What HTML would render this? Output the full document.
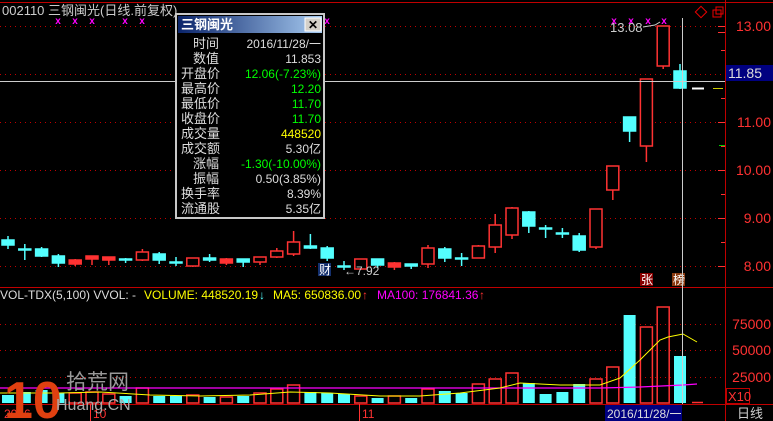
<!DOCTYPE html>
<html><head><meta charset="utf-8"><style>
html,body{margin:0;padding:0;background:#000;width:773px;height:421px;overflow:hidden}
svg{display:block}
text{font-family:"Liberation Sans","WenQuanYi Zen Hei","Noto Sans CJK SC",sans-serif}
</style></head><body>
<svg width="773" height="421" viewBox="0 0 773 421" xmlns="http://www.w3.org/2000/svg">
<rect width="773" height="421" fill="#000"/>
<g stroke="#c00000" stroke-width="1">
<line x1="0" y1="2.5" x2="773" y2="2.5"/>
<line x1="0" y1="287.5" x2="773" y2="287.5"/>
<line x1="0" y1="404.5" x2="773" y2="404.5"/>
<line x1="725.5" y1="0" x2="725.5" y2="421"/>
</g>
<g stroke="#c00000" stroke-width="1" stroke-dasharray="1,4">
<line x1="0" y1="26.5" x2="725" y2="26.5"/>
<line x1="0" y1="74.5" x2="725" y2="74.5"/>
<line x1="0" y1="122.5" x2="725" y2="122.5"/>
<line x1="0" y1="170.5" x2="725" y2="170.5"/>
<line x1="0" y1="218.5" x2="725" y2="218.5"/>
<line x1="0" y1="266.5" x2="725" y2="266.5"/>
<line x1="0" y1="324.5" x2="725" y2="324.5"/>
<line x1="0" y1="350.5" x2="725" y2="350.5"/>
<line x1="0" y1="377.5" x2="725" y2="377.5"/>
</g>
<g stroke="#ff3232">
<line x1="718" y1="26.5" x2="725" y2="26.5"/><line x1="718" y1="122.5" x2="725" y2="122.5"/>
<line x1="718" y1="170.5" x2="725" y2="170.5"/><line x1="718" y1="218.5" x2="725" y2="218.5"/>
<line x1="718" y1="266.5" x2="725" y2="266.5"/><line x1="718" y1="32.5" x2="725" y2="32.5"/>
<line x1="721" y1="50.5" x2="725" y2="50.5"/><line x1="721" y1="98.5" x2="725" y2="98.5"/>
<line x1="721" y1="146.5" x2="725" y2="146.5"/><line x1="721" y1="194.5" x2="725" y2="194.5"/>
<line x1="721" y1="242.5" x2="725" y2="242.5"/>
</g>
<line x1="719" y1="145.5" x2="725" y2="145.5" stroke="#0c0"/>
<g fill="#ff3232" font-size="14" text-anchor="end">
<text x="771" y="31">13.00</text><text x="771" y="127">11.00</text><text x="771" y="175">10.00</text>
<text x="771" y="223">9.00</text><text x="771" y="271">8.00</text>
<text x="771" y="329">75000</text><text x="771" y="355">50000</text><text x="771" y="382">25000</text>
</g>
<rect x="726" y="65" width="47" height="16" fill="#000080"/>
<text x="728" y="78" font-size="14" fill="#ddd">11.85</text>
<rect x="726.5" y="388.5" width="23" height="15" fill="none" stroke="#c00000"/>
<text x="728" y="401" font-size="13" fill="#ff3232">X10</text>
<text x="737" y="418" font-size="13" fill="#ccc">日线</text>

<text x="2" y="15" font-size="13" fill="#ccc">002110 三钢闽光(日线.前复权)</text>
<g fill="#ff00ff" font-size="10" font-weight="bold" text-anchor="middle">
<text x="58" y="24">x</text><text x="75" y="24">x</text><text x="92" y="24">x</text><text x="125" y="24">x</text><text x="142" y="24">x</text><text x="327" y="24">x</text>
<text x="614" y="24">x</text><text x="631" y="24">x</text><text x="648" y="24">x</text><text x="664" y="24">x</text>
</g>
<rect x="697" y="8" width="8" height="8" fill="none" stroke="#e00" transform="rotate(45 701 12)"/>
<rect x="713" y="10" width="8" height="7" fill="none" stroke="#e00"/><rect x="716" y="7" width="7" height="7" fill="none" stroke="#e00"/>
<text x="610" y="32" font-size="13" fill="#ccc">13.08</text>
<path d="M643 27 L655 25 L660 22" stroke="#ccc" fill="none"/>

<g stroke-width="1.5">
<g stroke="#54ffff" fill="#54ffff">
<line x1="8" y1="236" x2="8" y2="249"/><rect x="2" y="240" width="12" height="5"/>
<line x1="24.8" y1="244" x2="24.8" y2="260"/><rect x="18.8" y="249" width="12" height="1"/>
<line x1="41.6" y1="247" x2="41.6" y2="257"/><rect x="35.6" y="249" width="12" height="7"/>
<line x1="58.4" y1="254" x2="58.4" y2="267"/><rect x="52.4" y="256" width="12" height="7"/>
<line x1="125.6" y1="258" x2="125.6" y2="263"/><rect x="119.6" y="259" width="12" height="1"/>
<line x1="159.2" y1="252" x2="159.2" y2="264"/><rect x="153.2" y="254" width="12" height="6"/>
<line x1="176" y1="257" x2="176" y2="266"/><rect x="170" y="262" width="12" height="1"/>
<line x1="209.6" y1="254" x2="209.6" y2="262"/><rect x="203.6" y="258" width="12" height="2"/>
<line x1="243.2" y1="259" x2="243.2" y2="267"/><rect x="237.2" y="259" width="12" height="3"/>
<line x1="310.4" y1="234" x2="310.4" y2="249"/><rect x="304.4" y="246" width="12" height="2"/>
<line x1="327.2" y1="246" x2="327.2" y2="261"/><rect x="321.2" y="248" width="12" height="10"/>
<line x1="344" y1="261" x2="344" y2="270"/><rect x="338" y="266" width="12" height="1"/>
<line x1="377.6" y1="259" x2="377.6" y2="268"/><rect x="371.6" y="259" width="12" height="6"/>
<line x1="411.2" y1="264" x2="411.2" y2="269"/><rect x="405.2" y="264" width="12" height="2"/>
<line x1="444.8" y1="247" x2="444.8" y2="262"/><rect x="438.8" y="249" width="12" height="9"/>
<line x1="461.6" y1="253" x2="461.6" y2="266"/><rect x="455.6" y="258" width="12" height="1"/>
<line x1="528.8" y1="211" x2="528.8" y2="233"/><rect x="522.8" y="212" width="12" height="14"/>
<line x1="545.6" y1="225" x2="545.6" y2="238"/><rect x="539.6" y="228" width="12" height="1"/>
<line x1="562.4" y1="228" x2="562.4" y2="238"/><rect x="556.4" y="233" width="12" height="1"/>
<line x1="579.2" y1="233" x2="579.2" y2="252"/><rect x="573.2" y="236" width="12" height="14"/>
<line x1="629.6" y1="117" x2="629.6" y2="142"/><rect x="623.6" y="117" width="12" height="14"/>
<line x1="680" y1="64" x2="680" y2="89"/><rect x="674" y="71" width="12" height="17"/>
</g>
<g stroke="#ff3232" fill="#ff3232">
<line x1="75.2" y1="259" x2="75.2" y2="266"/><rect x="69.2" y="260" width="12" height="4"/>
<line x1="92" y1="256" x2="92" y2="265"/><rect x="86" y="256" width="12" height="3"/>
<line x1="108.8" y1="257" x2="108.8" y2="265"/><rect x="102.8" y="257" width="12" height="3"/>
<line x1="226.4" y1="258" x2="226.4" y2="265"/><rect x="220.4" y="259" width="12" height="4"/>
<line x1="394.4" y1="262" x2="394.4" y2="270"/><rect x="388.4" y="263" width="12" height="4"/>
</g>
<g stroke="#ff3232" fill="#000">
<line x1="142.4" y1="249" x2="142.4" y2="261"/><rect x="136.4" y="252" width="12" height="8"/>
<line x1="192.8" y1="258" x2="192.8" y2="267"/><rect x="186.8" y="258" width="12" height="8"/>
<line x1="260" y1="257" x2="260" y2="265"/><rect x="254" y="257" width="12" height="5"/>
<line x1="276.8" y1="248" x2="276.8" y2="258"/><rect x="270.8" y="251" width="12" height="6"/>
<line x1="293.6" y1="231" x2="293.6" y2="256"/><rect x="287.6" y="242" width="12" height="12"/>
<line x1="360.8" y1="259" x2="360.8" y2="270"/><rect x="354.8" y="259" width="12" height="10"/>
<line x1="428" y1="245" x2="428" y2="268"/><rect x="422" y="248" width="12" height="16"/>
<line x1="478.4" y1="245" x2="478.4" y2="258"/><rect x="472.4" y="246" width="12" height="12"/>
<line x1="495.2" y1="214" x2="495.2" y2="253"/><rect x="489.2" y="225" width="12" height="22"/>
<line x1="512" y1="207" x2="512" y2="239"/><rect x="506" y="208" width="12" height="27"/>
<line x1="596" y1="209" x2="596" y2="249"/><rect x="590" y="209" width="12" height="38"/>
<line x1="612.8" y1="166" x2="612.8" y2="200"/><rect x="606.8" y="166" width="12" height="24"/>
<line x1="646.4" y1="79" x2="646.4" y2="162"/><rect x="640.4" y="79" width="12" height="67"/>
<line x1="663.2" y1="26" x2="663.2" y2="69"/><rect x="657.2" y="26" width="12" height="40"/>
</g>
</g>
<line x1="692" y1="88.5" x2="704" y2="88.5" stroke="#fff" stroke-width="2"/>
<line x1="713" y1="88.5" x2="723" y2="88.5" stroke="#cc0"/>
<text x="344" y="275" font-size="12" fill="#ccc">←7.92</text>
<rect x="318" y="263" width="13" height="13" fill="#14306e"/><text x="319" y="274" font-size="12" fill="#fff">财</text>
<rect x="640" y="273" width="13" height="13" fill="#800"/><text x="641" y="284" font-size="12" fill="#fff">张</text>
<rect x="672" y="273" width="13" height="13" fill="#8a3a10"/><text x="673" y="284" font-size="12" fill="#fff">榜</text>

<g font-size="12">
<text x="0" y="299" fill="#ddd">VOL-TDX(5,100)  VVOL: -</text>
<text x="144" y="299" fill="#ff0">VOLUME: 448520.19</text><text x="259" y="299" fill="#54ffff">↓</text>
<text x="273" y="299" fill="#ff0">MA5: 650836.00</text><text x="362" y="299" fill="#ff3232">↑</text>
<text x="377" y="299" fill="#ff00ff">MA100: 176841.36</text><text x="479" y="299" fill="#ff3232">↑</text>
</g>
<g fill="#54ffff">
<rect x="2" y="395" width="12" height="8"/><rect x="18.8" y="392" width="12" height="11"/><rect x="35.6" y="390" width="12" height="13"/><rect x="52.4" y="393" width="12" height="10"/>
<rect x="119.6" y="396" width="12" height="7"/><rect x="153.2" y="396" width="12" height="7"/><rect x="170" y="396" width="12" height="7"/><rect x="203.6" y="397" width="12" height="6"/>
<rect x="237.2" y="396" width="12" height="7"/><rect x="304.4" y="392" width="12" height="11"/><rect x="321.2" y="393" width="12" height="10"/><rect x="338" y="394" width="12" height="9"/>
<rect x="371.6" y="398" width="12" height="5"/><rect x="405.2" y="398" width="12" height="5"/><rect x="438.8" y="391" width="12" height="12"/><rect x="455.6" y="393" width="12" height="10"/>
<rect x="522.8" y="383" width="12" height="20"/><rect x="539.6" y="394" width="12" height="9"/><rect x="556.4" y="392" width="12" height="11"/><rect x="573.2" y="384" width="12" height="19"/>
<rect x="623.6" y="315" width="12" height="88"/><rect x="674" y="356" width="12" height="47"/>
</g>
<g fill="none" stroke="#ff3232" stroke-width="1.5">
<rect x="69.2" y="393" width="12" height="10"/><rect x="86" y="392" width="12" height="11"/><rect x="102.8" y="394" width="12" height="9"/><rect x="136.4" y="388" width="12" height="15"/>
<rect x="186.8" y="395" width="12" height="8"/><rect x="220.4" y="397" width="12" height="6"/><rect x="254" y="393" width="12" height="10"/><rect x="270.8" y="389" width="12" height="14"/>
<rect x="287.6" y="385" width="12" height="18"/><rect x="354.8" y="396" width="12" height="7"/><rect x="388.4" y="396" width="12" height="7"/><rect x="422" y="389" width="12" height="14"/>
<rect x="472.4" y="384" width="12" height="19"/><rect x="489.2" y="379" width="12" height="24"/><rect x="506" y="373" width="12" height="30"/><rect x="590" y="379" width="12" height="24"/>
<rect x="606.8" y="367" width="12" height="36"/><rect x="640.4" y="327" width="12" height="76"/><rect x="657.2" y="307" width="12" height="96"/>
</g>
<line x1="692" y1="402.5" x2="703" y2="402.5" stroke="#ff3232" stroke-width="1.5"/>
<polyline fill="none" stroke="#ff00ff" stroke-width="1.2" points="0,388 600,388 640,387 683,385 697,384"/>
<polyline fill="none" stroke="#ff0" stroke-width="1" points="0,393 60,393 100,392 150,395 200,396 250,395 290,392 330,393 380,396 420,396 460,393 500,388 520,383 560,385 600,385 620,378 640,360 660,340 668,337 683,334 697,342"/>
<line x1="0" y1="81.5" x2="725" y2="81.5" stroke="#ccc"/>
<line x1="682.5" y1="18" x2="682.5" y2="404" stroke="#ccc"/>

<g stroke="#ff3232"><line x1="90.5" y1="404" x2="90.5" y2="421"/><line x1="359.5" y1="404" x2="359.5" y2="421"/><line x1="40" y1="405" x2="40" y2="409"/></g>
<text x="4" y="418" font-size="12" fill="#ff3232">2016</text>
<text x="93" y="418" font-size="12" fill="#ff3232">10</text>
<text x="362" y="418" font-size="12" fill="#ff3232">11</text>
<rect x="605" y="405" width="77" height="16" fill="#000080"/>
<text x="607" y="418" font-size="12" fill="#ddd">2016/11/28/一</text>

<text x="4" y="418" font-size="52" font-weight="bold" fill="#e04010" font-family="Liberation Sans,sans-serif">10</text>
<text x="66" y="389" font-size="21" fill="#999">拾荒网</text>
<text x="56" y="410" font-size="16" fill="#aaa">Huang.CN</text>

<rect x="176" y="14" width="148" height="204" fill="#000" stroke="#c8c8c8" stroke-width="2"/>
<defs><linearGradient id="g" x1="0" x2="1"><stop offset="0" stop-color="#0a246a"/><stop offset="1" stop-color="#a6caf0"/></linearGradient></defs>
<rect x="178" y="16" width="144" height="17" fill="url(#g)"/>
<text x="181" y="29" font-size="13" font-weight="bold" fill="#fff">三钢闽光</text>
<rect x="305" y="18" width="16" height="13" fill="#d4d0c8" stroke="#fff"/>
<text x="308" y="29" font-size="12" font-weight="bold" fill="#000">✕</text>
<g font-size="13" fill="#ddd">
<text x="193" y="48">时间</text><text x="193" y="63">数值</text><text x="181" y="78">开盘价</text><text x="181" y="93">最高价</text>
<text x="181" y="108">最低价</text><text x="181" y="123">收盘价</text><text x="181" y="138">成交量</text><text x="181" y="153">成交额</text>
<text x="193" y="168">涨幅</text><text x="193" y="183">振幅</text><text x="181" y="198">换手率</text><text x="181" y="213">流通股</text>
</g>
<g font-size="12" text-anchor="end">
<text x="321" y="48" fill="#ddd">2016/11/28/一</text><text x="321" y="63" fill="#ddd">11.853</text>
<text x="321" y="78" fill="#0f0">12.06(-7.23%)</text><text x="321" y="93" fill="#0f0">12.20</text>
<text x="321" y="108" fill="#0f0">11.70</text><text x="321" y="123" fill="#0f0">11.70</text>
<text x="321" y="138" fill="#ff0">448520</text><text x="321" y="153" fill="#ddd">5.30亿</text>
<text x="321" y="168" fill="#0f0">-1.30(-10.00%)</text><text x="321" y="183" fill="#ddd">0.50(3.85%)</text>
<text x="321" y="198" fill="#ddd">8.39%</text><text x="321" y="213" fill="#ddd">5.35亿</text>
</g>
</svg>
</body></html>
